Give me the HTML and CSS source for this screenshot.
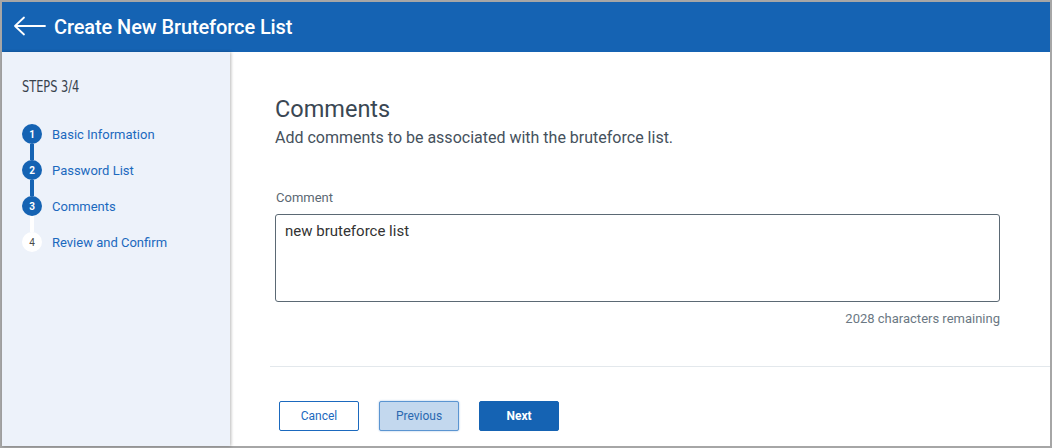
FILE: index.html
```html
<!DOCTYPE html>
<html lang="en">
<head>
<meta charset="utf-8">
<title>Create New Bruteforce List</title>
<link rel="stylesheet" href="styles.css">
</head>
<body>
<div class="frame">
  <header class="topbar">
    <svg class="back" width="34" height="20" viewBox="0 0 34 20" aria-hidden="true">
      <path d="M2 10 H32 M11 1.5 L2 10 L11 18.5" fill="none" stroke="#fff" stroke-width="1.8" stroke-linecap="round" stroke-linejoin="round"/>
    </svg>
    <h1 class="title">Create New Bruteforce List</h1>
  </header>
  <div class="body">
    <aside class="sidebar">
      <div class="steps-count"><span>STEPS 3/4</span></div>
      <ol class="steps">
        <li class="step done">
          <div class="ind"><span class="seg seg-none"></span><span class="dot">1</span><span class="seg seg-blue"></span></div>
          <span class="label">Basic Information</span>
        </li>
        <li class="step done">
          <div class="ind"><span class="seg seg-blue"></span><span class="dot">2</span><span class="seg seg-blue"></span></div>
          <span class="label">Password List</span>
        </li>
        <li class="step done">
          <div class="ind"><span class="seg seg-blue"></span><span class="dot">3</span><span class="seg seg-white"></span></div>
          <span class="label">Comments</span>
        </li>
        <li class="step todo">
          <div class="ind"><span class="seg seg-white"></span><span class="dot">4</span><span class="seg seg-none"></span></div>
          <span class="label">Review and Confirm</span>
        </li>
      </ol>
    </aside>
    <main class="main">
      <section class="content">
        <h2 class="heading">Comments</h2>
        <p class="sub">Add comments to be associated with the bruteforce list.</p>
        <label class="field-label" for="comment">Comment</label>
        <textarea id="comment" class="comment">new bruteforce list</textarea>
        <div class="counter">2028 characters remaining</div>
      </section>
      <hr class="sep">
      <div class="actions">
        <button class="btn btn-outline">Cancel</button>
        <button class="btn btn-soft">Previous</button>
        <button class="btn btn-primary">Next</button>
      </div>
    </main>
  </div>
</div>
</body>
</html>
```

FILE: styles.css
```css
* { box-sizing: border-box; }
html, body { margin: 0; padding: 0; }
body {
  width: 1052px;
  height: 448px;
  overflow: hidden;
  font-family: Roboto, "Liberation Sans", Arial, sans-serif;
  background: #fff;
}
.frame {
  width: 1052px;
  height: 448px;
  border: 2px solid #a6a6a6;
  display: flex;
  flex-direction: column;
}
.topbar {
  height: 50px;
  flex: none;
  background: #1563b3;
  display: flex;
  align-items: center;
  padding-left: 11px;
}
.back { display: block; margin-top: -3px; }
.title {
  margin: 0 0 0 7px;
  color: #fff;
  font-size: 20px;
  font-weight: 500;
  line-height: 50px;
  letter-spacing: -0.1px;
}
.body {
  flex: 1;
  display: flex;
  min-height: 0;
}
.sidebar {
  width: 228px;
  flex: none;
  background: #edf2fa;
  box-shadow: 1px 0 3px rgba(0,0,0,0.28);
  position: relative;
  z-index: 1;
  padding: 25px 0 0 20px;
}
.steps-count {
  height: 20px;
  line-height: 20px;
  font-family: "DejaVu Sans Condensed", "DejaVu Sans", sans-serif;
  font-size: 16px;
  color: #39434d;
}
.steps-count span {
  display: inline-block;
  transform: scaleX(0.79);
  transform-origin: left center;
}
.steps {
  list-style: none;
  margin: 19px 0 0 0;
  padding: 0;
}
.step {
  display: flex;
  align-items: center;
  height: 36px;
}
.ind {
  width: 20px;
  display: flex;
  flex-direction: column;
  align-items: center;
}
.seg { width: 4px; height: 8px; display: block; }
.seg-blue { background: #1563b3; }
.seg-white { background: #fff; }
.seg-none { background: transparent; }
.dot {
  width: 20px;
  height: 20px;
  border-radius: 50%;
  display: flex;
  align-items: center;
  justify-content: center;
  font-size: 10px;
  font-weight: 700;
}
.done .dot { background: #1563b3; color: #fff; }
.todo .dot { background: #fff; color: #4a4a4a; font-weight: 400; }
.label {
  margin-left: 10px;
  font-size: 13px;
  color: #1b69be;
}
.main {
  flex: 1;
  background: #fff;
  display: flex;
  flex-direction: column;
}
.content {
  padding: 44px 50px 0 45px;
  display: flex;
  flex-direction: column;
}
.heading {
  margin: 0;
  font-size: 23.5px;
  font-weight: 400;
  line-height: 26px;
  color: #3a4753;
}
.sub {
  margin: 6px 0 0 0;
  font-size: 16px;
  line-height: 20px;
  color: #45515c;
}
.field-label {
  margin-top: 42px;
  font-size: 13px;
  line-height: 16px;
  color: #5b6873;
  padding-left: 1px;
}
.comment {
  margin-top: 8px;
  height: 88px;
  width: 100%;
  border: 1px solid #5b6974;
  border-radius: 3px;
  padding: 7px 9px;
  font-family: Roboto, "Liberation Sans", Arial, sans-serif;
  font-size: 15px;
  line-height: 18px;
  color: #333;
  resize: none;
  outline: none;
}
.counter {
  margin-top: 9px;
  text-align: right;
  font-size: 13px;
  line-height: 16px;
  color: #6b7883;
}
.sep {
  margin: 39px 0 0 40px;
  border: 0;
  height: 1px;
  background: #e3e8ec;
}
.actions {
  margin-top: 34px;
  padding-left: 49px;
  display: flex;
  gap: 20px;
}
.btn {
  width: 80px;
  height: 30px;
  border-radius: 2px;
  font-family: Roboto, "Liberation Sans", Arial, sans-serif;
  font-size: 12px;
  padding: 0;
  cursor: pointer;
}
.btn-outline {
  background: #fff;
  border: 1px solid #1b69be;
  color: #1b69be;
}
.btn-soft {
  background: #c3d8ee;
  border: 1px solid #5b95d1;
  color: #2a68b0;
  box-shadow: 0 0 2px rgba(27,105,190,0.45);
}
.btn-primary {
  background: #1563b3;
  border: 1px solid #1563b3;
  color: #fff;
  font-weight: 700;
}
```
